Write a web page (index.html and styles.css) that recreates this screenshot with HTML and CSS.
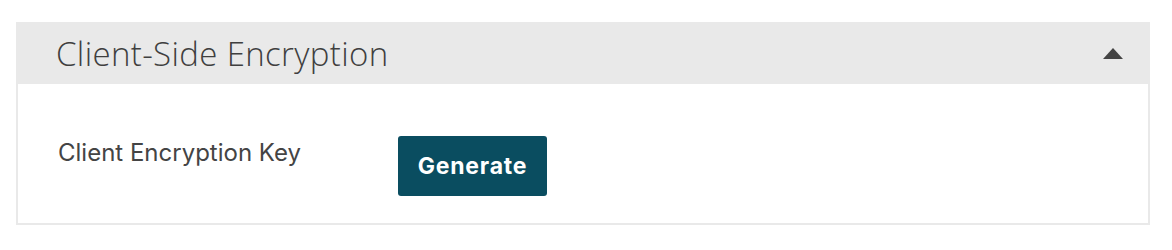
FILE: index.html
```html
<!DOCTYPE html>
<html lang="en">
  <head>
    <meta charset="UTF-8" />
    <title>Client-Side Encryption</title>
    <link rel="stylesheet" href="styles.css">
  </head>

  <body>
    <section class="panel">
      <header class="panel__head">
        <h2 class="panel__title">Client-Side Encryption</h2>
        <span class="panel__toggle"></span>
      </header>

      <div class="panel__body">
        <span class="panel__label">Client Encryption Key</span>
        <button class="panel__btn">Generate</button>
      </div>
    </section>
  </body>
</html>
```

FILE: styles.css
```css
body {
  margin: 0;
  padding: 22px 22px 0 16px;
  background: #fff;
}

.panel {
  border: 2px solid #e9e9e9;
  border-top: 0;
}

.panel__head {
  display: flex;
  align-items: center;
  justify-content: space-between;
  height: 62px;
  padding: 0 27px 0 40px;
  margin: 0 -2px;
  background: #e9e9e9;
}

.panel__title {
  margin: 0;
  font-family: "Open Sans", sans-serif;
  font-weight: 300;
  font-size: 33px;
  letter-spacing: 0.35px;
  color: #3f3f3f;
}

.panel__toggle {
  width: 0;
  height: 0;
  border-left: 10px solid transparent;
  border-right: 10px solid transparent;
  border-bottom: 11px solid #444;
}

.panel__body {
  display: flex;
  align-items: flex-start;
  padding: 52px 40px 27px;
}

.panel__label {
  width: 340px;
  margin-top: 2px;
  font-family: Inter, sans-serif;
  font-size: 24px;
  color: #444;
}

.panel__btn {
  width: 149px;
  height: 60px;
  border: 0;
  border-radius: 3px;
  background: #0a4d60;
  color: #fff;
  font-family: Inter, sans-serif;
  font-weight: 700;
  font-size: 23px;
  letter-spacing: 0.8px;
}
```
